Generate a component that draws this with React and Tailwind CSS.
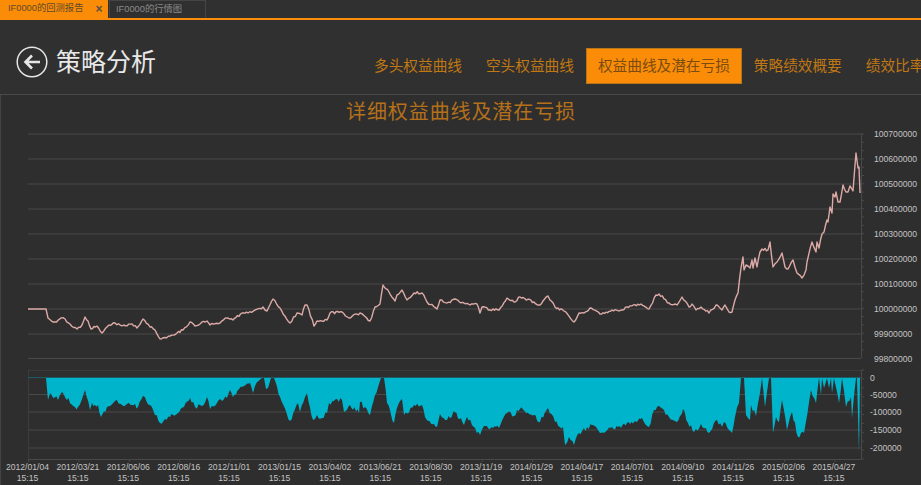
import React from 'react';

const cjk = '"Liberation Sans","Noto Sans CJK SC",sans-serif';

const navItems = ['多头权益曲线', '空头权益曲线', '权益曲线及潜在亏损', '策略绩效概要', '绩效比率'];

const equityTicks = [
  ['100700000', 134], ['100600000', 159], ['100500000', 184], ['100400000', 209], ['100300000', 234],
  ['100200000', 259], ['100100000', 284], ['100000000', 309], ['99900000', 334], ['99800000', 358.5],
];
const drawdownTicks = [['0', 377.5], ['-50000', 394.5], ['-100000', 412], ['-150000', 430], ['-200000', 448]];

const dates = [
  '2012/01/04', '2012/03/21', '2012/06/06', '2012/08/16', '2012/11/01', '2013/01/15', '2013/04/02', '2013/06/21',
  '2013/08/30', '2013/11/19', '2014/01/29', '2014/04/17', '2014/07/01', '2014/09/10', '2014/11/26', '2015/02/06', '2015/04/27',
];

// read off the reference, page coordinates
const equityLine = `28,309 46,309 48,318 55,322 61,318 65,319 70,324 77,329 82,325 85,317 88,321 91,329 97,326 102,333 107,327 115,323
122,326 132,324 137,328 143,319 150,327 155,330 160,339 170,336 177,333 183,330 190,322 195,326 200,324 207,321 210,325 220,323
227,318 233,320 242,313 248,313 255,310 263,307 267,311 273,299 280,308 290,323 297,313 302,315 305,305 307,305 314,326 317,321
327,320 330,313 342,312 349,318 360,313 370,321 375,307 380,304 383,285 389,292 395,301 397,295 402,290 407,300 414,293 422,293
427,302 437,309 440,300 447,303 455,299 464,303 470,305 477,304 480,313 482,307 490,310 499,310 507,298 514,302 520,297 534,302
540,305 548,296 555,307 564,311 574,322 579,313 584,313 590,308 600,314 612,310 621,310 627,307 641,304 649,309 656,295 659,294
669,303 677,305 682,297 689,307 692,304 696,310 701,307 709,313 716,305 722,310 725,305 729,312 732,312 735,300 738,293 741,268
743,257 744,270 746,265 750,268 752,260 753,268 755,258 757,267 760,252 762,249 768,250 770,242 773,267 777,262 782,253 785,267
788,269 793,260 797,273 802,278 806,270 807,262 812,242 816,252 817,242 819,248 822,234 824,232 827,220 828,222 830,207 832,213
833,194 835,197 836,192 838,202 840,202 843,185 846,192 848,192 850,186 853,191 856,153 858,168 859,167 860,193`;

const drawdownArea = `46,378 48,400 50,393 58,400 62,392 75,407 78,407 85,390 90,410 92,403 98,405 101,417 107,407 115,401 122,405 132,405
138,407 143,396 150,405 160,423 170,417 178,413 190,398 195,407 202,406 207,397 210,409 217,403 227,398 230,390 233,397 242,387
250,383 253,393 257,382 262,378 264,378 266,389 268,388 271,378 274,378 280,397 290,421 298,403 300,412 305,397 307,393 313,420
317,415 322,418 327,413 329,403 342,400 344,412 350,405 359,413 360,402 370,415 375,395 381,378 384,378 387,403 394,423 397,408
402,399 404,415 414,405 422,405 425,417 437,427 440,414 447,420 455,412 464,425 467,417 480,435 484,426 499,428 507,413 514,416
520,409 534,415 540,422 548,408 555,422 563,427 565,445 569,437 574,445 579,433 592,425 600,433 612,427 621,428 627,423 642,418
649,427 654,410 659,406 669,417 677,422 683,409 688,423 694,432 701,424 709,433 717,420 722,427 724,422 732,433 735,417 739,403
741,378 744,378 746,415 750,420 751,405 756,416 760,393 762,378 765,407 769,378 771,378 773,433 776,417 779,422 782,400 787,430
792,412 798,437 801,433 804,433 811,390 816,403 819,378 821,395 822,378 824,388 827,378 829,388 831,378 832,393 834,378 839,403
842,378 846,407 851,397 852,418 856,378 857,378 859,452 860,378`;

// adds the day-to-day wobble between the points read off the picture
function roughen(source, amp, floorY) {
  const pts = source.trim().split(/\s+/).map((p) => p.split(',').map(Number));
  let seed = 7;
  const noise = () => {
    seed = (seed * 1103515 + 12345) % 2147483;
    return seed / 2147483 - 0.5;
  };
  const out = [pts[0]];
  for (let i = 1; i < pts.length; i++) {
    const [x0, y0] = pts[i - 1];
    const [x1, y1] = pts[i];
    const steps = Math.floor((x1 - x0) / 1.5);
    for (let s = 1; s < steps; s++) {
      const t = s / steps;
      const y = y0 + (y1 - y0) * t;
      const scale = floorY ? Math.min(1, (y - floorY) / 14) : y0 === y1 && y0 === 309 ? 0 : 1;
      out.push([x0 + (x1 - x0) * t, y + noise() * amp * scale]);
    }
    out.push(pts[i]);
  }
  return out.map(([x, y]) => `${x.toFixed(1)},${y.toFixed(1)}`).join(' ');
}

function BackIcon() {
  return (
    <svg width="32" height="32" viewBox="0 0 32 32" fill="none" stroke="#e6e6e6" className="shrink-0">
      <circle cx="16" cy="16" r="14.8" strokeWidth="1.5" />
      <path d="M24 16H10M16 9.5L9.5 16L16 22.5" strokeWidth="2.6" />
    </svg>
  );
}

function Chart() {
  const minorTicks = [];
  for (let y = 134; y < 358; y += 8.3) minorTicks.push(y);
  const lowerTicks = [];
  for (let y = 370; y < 459; y += 8.9) lowerTicks.push(y);

  return (
    <svg width="921" height="360" viewBox="0 125 921 360" className="block -ml-px" style={{ fontFamily: cjk }}>
      {equityTicks.map(([label, y]) => (
        <line key={label} x1="28" x2="861" y1={y} y2={y} stroke="#494949" />
      ))}
      {drawdownTicks.map(([label, y]) => (
        <line key={label} x1="28" x2="861" y1={y} y2={y} stroke="#494949" />
      ))}
      <line x1="28" x2="861" y1="370.5" y2="370.5" stroke="#3a3a3a" />
      <line x1="28" x2="861" y1="459.5" y2="459.5" stroke="#494949" />
      <line x1="28.5" x2="28.5" y1="370" y2="459" stroke="#3c3c3c" />
      <line x1="861.5" x2="861.5" y1="134" y2="358" stroke="#494949" />
      <line x1="861.5" x2="861.5" y1="370" y2="459" stroke="#494949" />
      {minorTicks.map((y) => (
        <line key={y} x1="861" x2="864" y1={y} y2={y} stroke="#494949" />
      ))}
      {lowerTicks.map((y) => (
        <line key={y} x1="861" x2="864" y1={y} y2={y} stroke="#494949" />
      ))}
      {dates.map((d, i) => (
        <line key={d} x1={28.5 + i * 50.4} x2={28.5 + i * 50.4} y1="459" y2="462" stroke="#494949" />
      ))}

      <polygon points={`46,378 ${roughen(drawdownArea, 5, 378)} 860,378`} fill="#00b4cc" />
      <line x1="28" x2="860" y1="377.5" y2="377.5" stroke="#1d5c66" />
      <polyline points={roughen(equityLine, 2.4)} fill="none" stroke="#dcaaa6" strokeWidth="1.4" strokeLinejoin="round" />

      {equityTicks.map(([label, y]) => (
        <text key={label} x="874" y={y + 3} fontSize="8.6" fill="#c4c4c4">{label}</text>
      ))}
      {drawdownTicks.map(([label, y]) => (
        <text key={label} x="870" y={y + 3} fontSize="8.6" fill="#c4c4c4">{label}</text>
      ))}
      {dates.map((d, i) => (
        <text key={d} x={27.5 + i * 50.4} y="470" fontSize="8.6" fill="#c4c4c4" textAnchor="middle">
          <tspan x={27.5 + i * 50.4}>{d}</tspan>
          <tspan x={27.5 + i * 50.4} dy="11">15:15</tspan>
        </text>
      ))}
    </svg>
  );
}

export default function App() {
  return (
    <div className="w-[921px] h-[485px] overflow-hidden bg-[#2e2e2e]" style={{ fontFamily: cjk }}>
      {/* window tabs */}
      <div className="flex h-[20px] bg-[#303030] border-b-2 border-[#fa8c07]">
        <div className="flex items-center w-[108px] pl-2 bg-[#fa8c07] text-[9.3px] text-[#5f4a2e]">
          <span>IF0000的回测报告</span>
          <span className="ml-[12px] text-[12px] font-bold text-[#5a5048]">×</span>
        </div>
        <div className="flex items-center w-[97px] ml-px pl-[6px] border border-b-0 border-[#454545] text-[9.3px] text-[#8a8a8a]">
          IF0000的行情图
        </div>
      </div>

      {/* header */}
      <div className="flex items-start h-[75px] pl-4 pt-[26px] overflow-hidden bg-[#303030] border-b border-[#4a4a4a]">
        <BackIcon />
        <h1 className="ml-2 w-[99px] shrink-0 text-[25px] leading-8 whitespace-nowrap text-[#e8e8e8]">策略分析</h1>
        <nav className="flex shrink-0 ml-[207px] mt-[2px] whitespace-nowrap text-[14.67px] text-[#c07814]">
          {navItems.map((item, i) => (
            <div
              key={item}
              className={
                i === 2
                  ? 'flex shrink-0 items-center h-9 px-[11px] bg-[#fa8c07] border border-[#b87418] text-[#7a4c12]'
                  : 'flex shrink-0 items-center h-9 px-3'
              }
            >
              {item}
            </div>
          ))}
        </nav>
      </div>

      <div className="border-l border-[#444]">
        <div className="h-[30px] pt-[2px] text-center text-[20px] tracking-[0.9px] text-[#b5701a]">
          详细权益曲线及潜在亏损
        </div>
        <Chart />
      </div>
    </div>
  );
}
